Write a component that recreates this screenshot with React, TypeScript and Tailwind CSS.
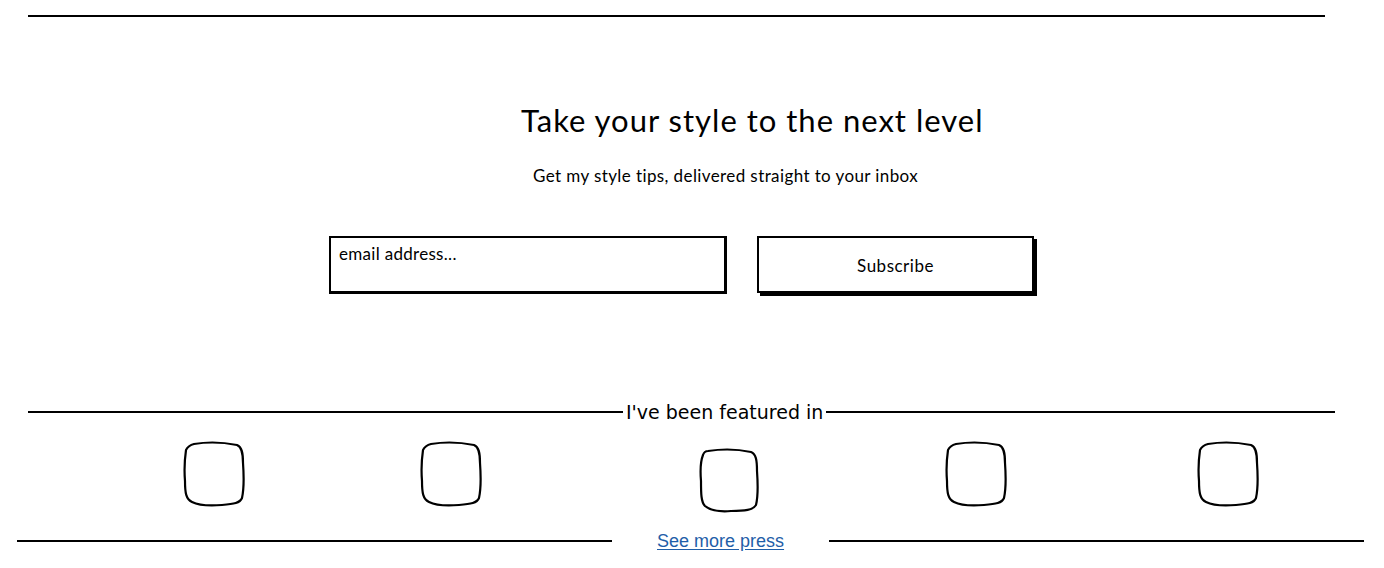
import React from "react";

const Blob = ({ d }: { d: string }) => (
  <svg width="64" height="66" viewBox="0 0 64 66" fill="none">
    <path d={d} stroke="#000" strokeWidth="2.2" strokeLinecap="round" strokeLinejoin="round" />
  </svg>
);

const shapeA =
  "M12 3 C24 1 40 1 55 4 C60 6 61 12 61 22 C62 36 62 48 60 57 C58 62 52 63 40 64 C28 65 16 64 10 61 C4 58 3 52 3 40 C2 28 3 16 4 9 C6 5 8 4 12 3 Z";
const shapeB =
  "M11 4 C24 2 40 2 54 5 C59 7 60 13 60 24 C61 38 61 50 59 58 C56 63 48 64 34 64 C22 65 13 63 8 59 C4 55 4 46 4 34 C3 22 4 13 6 8 C7 5 9 4 11 4 Z";

export default function App() {
  return (
    <div className="w-[1384px] h-[568px] bg-white overflow-hidden flex flex-col" style={{ fontFamily: "Lato, 'Noto Sans', sans-serif" }}>
      <div className="mt-[15px] ml-[28px] w-[1297px] h-[2px] bg-black" />
      <h1 className="mt-[85px] ml-[521px] text-[31px] leading-[36px] text-black font-normal tracking-[1px]">
        Take your style to the next level
      </h1>
      <p className="mt-[28px] ml-[533px] text-[17px] leading-[20px] text-black tracking-[0.4px]">
        Get my style tips, delivered straight to your inbox
      </p>
      <div className="mt-[50px] flex items-start">
        <div className="ml-[329px] w-[398px] h-[58px] border-2 border-black border-b-[3px] border-r-[3px] px-[8px] pt-[6px] text-[17px] leading-[20px] text-black tracking-[0.3px]">
          email address...
        </div>
        <div className="ml-[30px] w-[277px] h-[57px] border-2 border-black shadow-[3px_3px_0_0_#000] flex items-center justify-center text-[17px] text-black tracking-[0.5px] pt-[2px]">
          Subscribe
        </div>
      </div>
      <div className="mt-[107px] flex items-center">
        <div className="ml-[28px] w-[595px] h-[2px] bg-black" />
        <span className="px-[3px] text-[19px] leading-[22px] text-black" style={{ fontFamily: "'DejaVu Sans', sans-serif" }}>
          I've been featured in
        </span>
        <div className="w-[509px] h-[2px] bg-black" />
      </div>
      <div className="mt-[18px] flex items-start h-[72px]">
        <div className="ml-[182px]"><Blob d={shapeA} /></div>
        <div className="ml-[173px]"><Blob d={shapeA} /></div>
        <div className="ml-[214px] mt-[6px]"><Blob d={shapeB} /></div>
        <div className="ml-[183px]"><Blob d={shapeA} /></div>
        <div className="ml-[188px]"><Blob d={shapeA} /></div>
      </div>
      <div className="mt-[18px] flex items-center">
        <div className="ml-[17px] w-[595px] h-[2px] bg-black" />
        <a href="#" className="ml-[45px] text-[18px] leading-[20px] text-[#1f5ea8] underline underline-offset-2" style={{ fontFamily: "'Liberation Sans', Arial, sans-serif" }}>
          See more press
        </a>
        <div className="ml-[45px] w-[535px] h-[2px] bg-black" />
      </div>
    </div>
  );
}
